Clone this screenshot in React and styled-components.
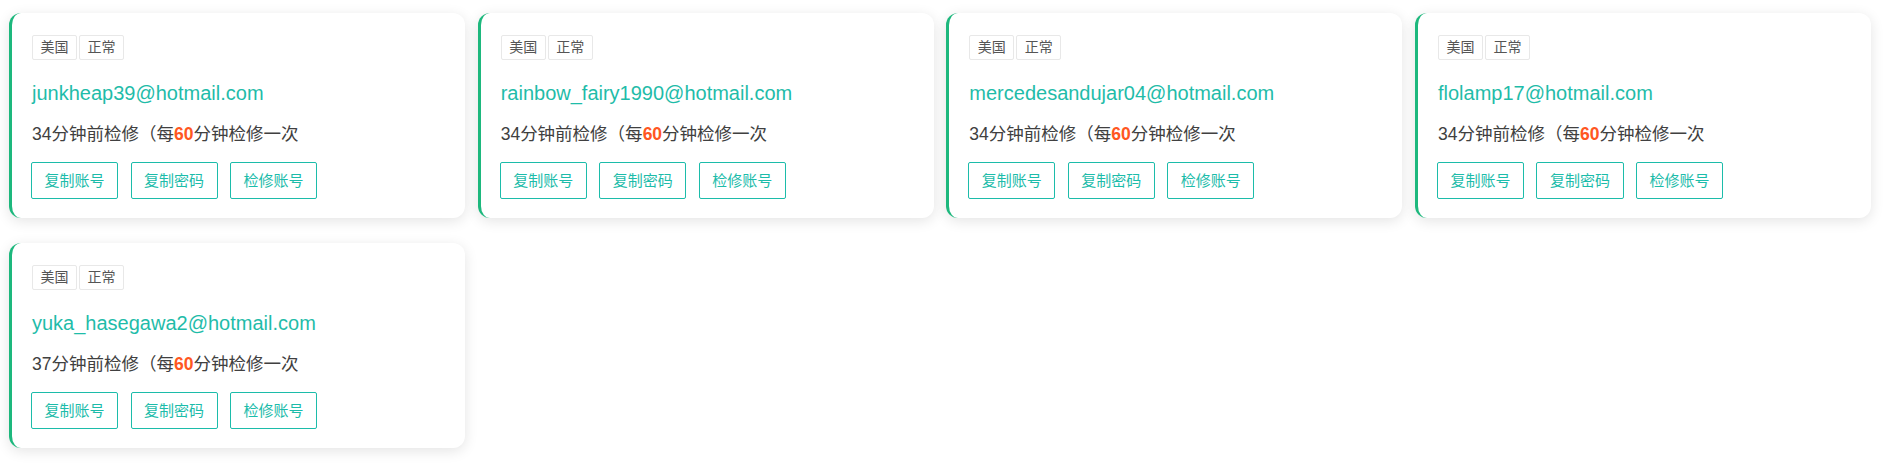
import React from "react";
import styled, { createGlobalStyle } from "styled-components";

const GlobalStyle = createGlobalStyle`
  html, body {
    margin: 0;
    padding: 0;
    background: #ffffff;
    font-family: "Liberation Sans", "Noto Sans CJK SC", sans-serif;
  }
`;

const Grid = styled.div`
  display: grid;
  grid-template-columns: repeat(4, 456px);
  column-gap: 12.67px;
  row-gap: 25px;
  padding: 13px 0 20px 9px;
`;

const Card = styled.div`
  box-sizing: border-box;
  height: 205px;
  background: #ffffff;
  border-radius: 12px;
  border-left: 3px solid #1db87d;
  box-shadow: 0 3px 14px rgba(0, 0, 0, 0.11);
  padding: 22px 20px 19px 20px;
  display: flex;
  flex-direction: column;
`;

const TagRow = styled.div`
  display: flex;
  gap: 2px;
`;

const Tag = styled.span`
  box-sizing: border-box;
  height: 25px;
  padding: 0 7.5px;
  border: 1px solid #e8e8e8;
  border-radius: 2px;
  font-size: 14px;
  line-height: 23px;
  color: #555555;
`;

const Email = styled.div`
  margin-top: 19px;
  font-size: 20px;
  line-height: 28px;
  color: #1fbca9;
`;

const Status = styled.div`
  margin-top: 15px;
  font-size: 17.5px;
  line-height: 24px;
  color: #404040;
`;

const Interval = styled.b`
  color: #ff5722;
  font-weight: bold;
`;

const Actions = styled.div`
  margin-top: 16px;
  display: flex;
  gap: 12.5px;
  margin-left: -1px;
`;

const ActionButton = styled.button`
  box-sizing: border-box;
  height: 37px;
  padding: 0 12.5px;
  background: #ffffff;
  border: 1px solid #1cbcaa;
  border-radius: 2px;
  color: #1cbcaa;
  font-family: "Liberation Sans", "Noto Sans CJK SC", sans-serif;
  font-size: 15px;
  line-height: 35px;
  cursor: pointer;
`;

const accounts = [
  { email: "junkheap39@hotmail.com", ago: 34 },
  { email: "rainbow_fairy1990@hotmail.com", ago: 34 },
  { email: "mercedesandujar04@hotmail.com", ago: 34 },
  { email: "flolamp17@hotmail.com", ago: 34 },
  { email: "yuka_hasegawa2@hotmail.com", ago: 37 },
];

function AccountCard({ email, ago }) {
  return (
    <Card>
      <TagRow>
        <Tag>美国</Tag>
        <Tag>正常</Tag>
      </TagRow>
      <Email>{email}</Email>
      <Status>
        {ago}分钟前检修（每<Interval>60</Interval>分钟检修一次
      </Status>
      <Actions>
        <ActionButton>复制账号</ActionButton>
        <ActionButton>复制密码</ActionButton>
        <ActionButton>检修账号</ActionButton>
      </Actions>
    </Card>
  );
}

export default function App() {
  return (
    <>
      <GlobalStyle />
      <Grid>
        {accounts.map((a) => (
          <AccountCard key={a.email} {...a} />
        ))}
      </Grid>
    </>
  );
}
